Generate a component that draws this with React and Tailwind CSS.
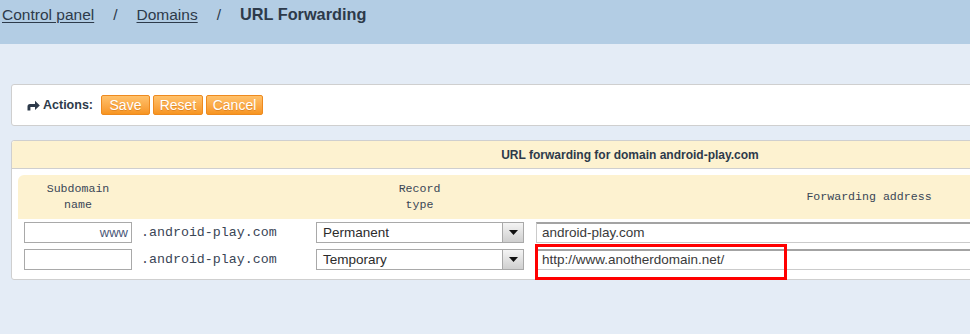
// URL forwarding page for a domain
const rows = [
  { sub: 'www', type: 'Permanent', target: 'android-play.com' },
  { sub: '', type: 'Temporary', target: 'http://www.anotherdomain.net/', marked: true },
];

function ForwardIcon() {
  return (
    <svg width="13" height="11" viewBox="0 0 13 11" className="shrink-0">
      <path d="M0.5 10.5 V6.5 Q0.5 4 3 4 H8 V0.8 L12.8 5.4 L8 10 V7 H3.4 V10.5 Z" fill="#2d3a4a" />
    </svg>
  );
}

function OrangeButton({ children, w }) {
  return (
    <button
      className={`${w} h-[20px] rounded-[2px] border border-[#ee8a1f] bg-gradient-to-b from-[#ffc16a] to-[#f7951f] text-[14px] leading-[18px] text-white [text-shadow:0_1px_0_rgba(180,90,0,0.35)]`}
    >
      {children}
    </button>
  );
}

function Dropdown({ value }) {
  return (
    <div className="flex h-[21px] w-[208px] items-stretch border border-[#a9a9a9] bg-white">
      <div className="flex-1 pl-[6px] text-[13.5px] leading-[19px] text-[#2b2b2b]">{value}</div>
      <div className="flex w-[21px] items-center justify-center border-l border-[#a9a9a9] bg-gradient-to-b from-[#f4f4f4] to-[#cfcfcf]">
        <svg width="9" height="5" viewBox="0 0 9 5">
          <path d="M0 0 H9 L4.5 5 Z" fill="#111" />
        </svg>
      </div>
    </div>
  );
}

export default function App() {
  return (
    <div className="min-h-screen w-[970px] overflow-hidden bg-[#e4ecf6] font-['Liberation_Sans',Arial,sans-serif] text-[#2d3a4a]">
      {/* хлебные крошки */}
      <div className="flex h-[44px] items-start bg-[#b3cde4] pl-[2px] pt-[5px] text-[15.5px] leading-[19px]">
        <a className="underline decoration-1 underline-offset-2">Control panel</a>
        <span className="px-[19px]">/</span>
        <a className="underline decoration-1 underline-offset-2">Domains</a>
        <span className="px-[19px]">/</span>
        <span className="text-[16.3px] font-bold">URL Forwarding</span>
      </div>

      <div className="pl-[11px] pt-[40px]">
        {/* панель действий */}
        <div className="flex h-[42px] w-[1234px] items-center rounded-[3px] border border-[#cfcfcf] bg-white pl-[15px]">
          <ForwardIcon />
          <span className="ml-[3px] text-[12.5px] font-bold">Actions:</span>
          <div className="ml-[8px] flex gap-[3px]">
            <OrangeButton w="w-[49px]">Save</OrangeButton>
            <OrangeButton w="w-[50px]">Reset</OrangeButton>
            <OrangeButton w="w-[57px]">Cancel</OrangeButton>
          </div>
        </div>

        {/* таблица переадресации */}
        <div className="mt-[14px] w-[1234px] rounded-[3px] border border-[#cfcfcf] bg-white">
          <div className="flex h-[28px] items-center justify-center rounded-t-[3px] border-b border-[#cfcfcf] bg-[#fdf2d0] pl-[4px] text-[12px] font-bold">
            URL forwarding for domain android-play.com
          </div>

          <div className="px-[6px] pb-[9px] pt-[6px]">
            <div className="flex h-[44px] items-center rounded-tl-[6px] bg-[#fdf2d0] font-['Liberation_Mono','Courier_New',monospace] text-[11.6px] leading-[16px] text-[#3a4656]">
              <div className="w-[120px] text-center">Subdomain<br />name</div>
              <div className="w-[172px]" />
              <div className="w-[219px] text-center">Record<br />type</div>
              <div className="w-[680px] text-center">Forwarding address</div>
            </div>

            <div className="flex flex-col gap-[6px] pt-[3px]">
              {rows.map((r, i) => (
                <div key={i} className="flex items-center pl-[6px]">
                  <div className="h-[21px] w-[108px] border border-[#a9a9a9] pr-[3px] text-right text-[13px] leading-[19px] text-[#4a5878]">
                    {r.sub}
                  </div>
                  <div className="ml-[9px] w-[175px] font-['Liberation_Mono','Courier_New',monospace] text-[13.3px] text-[#3a4656]">
                    .android-play.com
                  </div>
                  <Dropdown value={r.type} />
                  <div className="relative ml-[12px]">
                    <div className="h-[21px] w-[700px] border border-t-2 border-[#cbcbcb] border-t-[#a3a3a3] pl-[5px] text-[13.5px] leading-[17px] text-[#3a3a3a]">
                      {r.target}
                    </div>
                    {r.marked && (
                      <div className="absolute left-[-1px] top-[-5px] h-[36px] w-[252px] border-[3px] border-[#ff0000]" />
                    )}
                  </div>
                </div>
              ))}
            </div>
          </div>
        </div>
      </div>
    </div>
  );
}
